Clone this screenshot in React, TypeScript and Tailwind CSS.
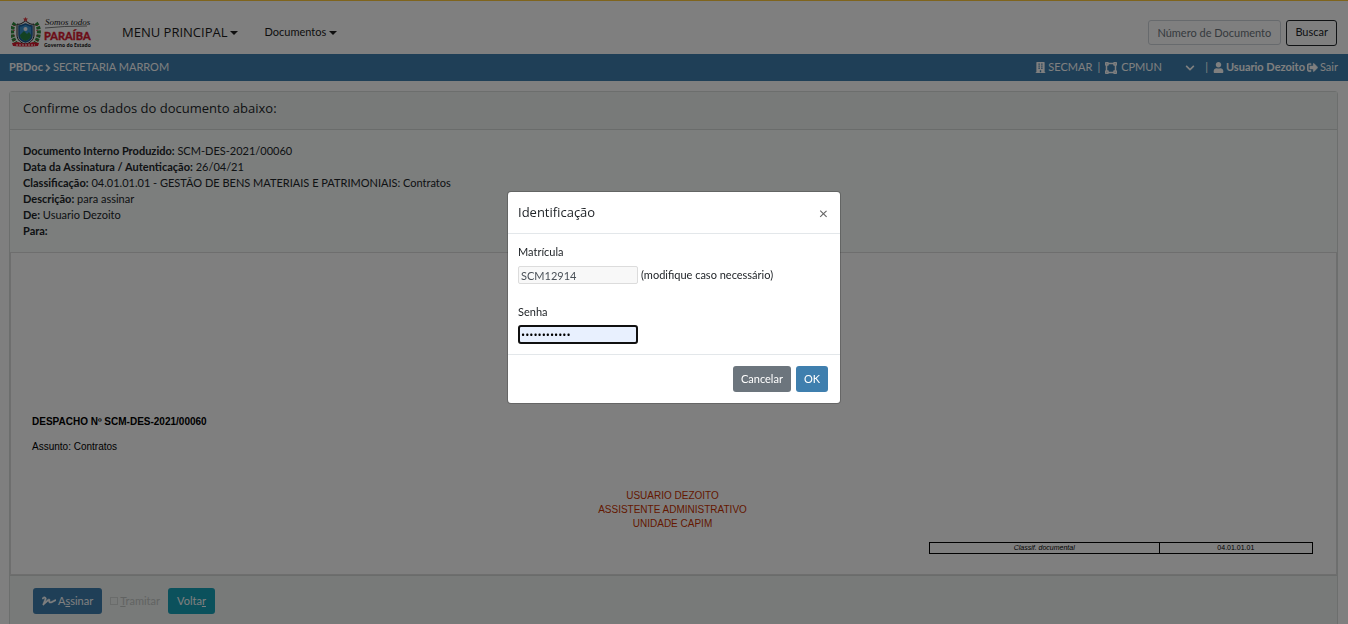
import type { ReactNode } from "react";
import {
  FaBuilding,
  FaChevronDown,
  FaChevronRight,
  FaSignature,
  FaSignOutAlt,
  FaUser,
  FaVectorSquare,
} from "react-icons/fa";

const details = [
  { label: "Documento Interno Produzido:", value: "SCM-DES-2021/00060" },
  { label: "Data da Assinatura / Autenticação:", value: "26/04/21" },
  {
    label: "Classificação:",
    value: "04.01.01.01 - GESTÃO DE BENS MATERIAIS E PATRIMONIAIS: Contratos",
  },
  { label: "Descrição:", value: "para assinar" },
  { label: "De:", value: "Usuario Dezoito" },
  { label: "Para:", value: "" },
];

function Logo() {
  return (
    <svg width="82" height="34" viewBox="0 0 82 34" role="img" aria-label="Governo da Paraíba">
      {/* coat of arms */}
      <path d="M4 7C0 12 0 21 5 27M25 7c4 5 4 14-1 20" fill="none" stroke="#2f8a3c" strokeWidth="4" strokeDasharray="3 1" />
      <path d="M3 9v16M26 9v16" stroke="#c8102e" strokeWidth="1" strokeDasharray="1 4" />
      <path d="M6 8c3 1 5-1 8.500-3C18 7 20 9 23 8v11c0 5-4 8-8.500 9C10 27 6 24 6 19z" fill="#f4f4f4" stroke="#222" strokeWidth="1" />
      <path d="M8 10c3 0 4-1 6.500-2C17 9 18 10 21 10v9c0 4-3 6-6.500 7C11 25 8 23 8 19z" fill="#3a93d0" stroke="#1b5c96" strokeWidth="1.500" />
      <path d="M9 19l4-4 3 3 2-2 2 3c0 3-2 5-5.500 6C11 24 9 22 9 19z" fill="#278444" />
      <circle cx="14.500" cy="13" r="2" fill="#f2f2f2" />
      <path d="M14.500 1l.8 1.500h1.700l-1.200 1.200.4 1.800-1.700-1-1.700 1 .4-1.800L12 2.500h1.700z" fill="#df3a43" />
      <path d="M1 27l6-1q7.500 3 15 0l6 1-1 3q-12 1-25 0z" fill="#d8182e" />
      <path d="M5 29h19" stroke="#fff" strokeWidth="1" strokeDasharray="2 1" />
      {/* wordmark */}
      <text x="34" y="9" fontSize="9" fontStyle="italic" fontFamily="Liberation Serif, serif" fill="#222">Somos todos</text>
      <path d="M34 12q18-2 42-2" fill="none" stroke="#222" strokeWidth=".6" />
      <text x="33" y="24" fontSize="11" fontWeight="700" fontFamily="Lato, sans-serif" stroke="#d8182e" strokeWidth=".4" fill="#d8182e">PARAÍBA</text>
      <text x="33" y="31" fontSize="5" fontWeight="700" fontFamily="Open Sans, sans-serif" fill="#222">Governo do Estado</text>
    </svg>
  );
}

function Caret() {
  return <span className="border-x-4 border-t-4 border-x-transparent border-t-current" />;
}

function Button({ className, children }: { className: string; children: ReactNode }) {
  return (
    <button
      type="button"
      className={`flex h-[26px] items-center gap-0.5 rounded-[3px] text-[11px] ${className}`}
    >
      {children}
    </button>
  );
}

function Header() {
  return (
    <header>
      <div className="flex h-[54px] items-center border-t border-[#ffc83a] px-[11px] pt-2.5">
        <a href="#inicio">
          <Logo />
        </a>
        <nav className="ml-[29px] flex items-center gap-[26px] text-[#1c1c1c]">
          <button type="button" className="flex items-center gap-[3px] font-['Open_Sans','Segoe_UI',sans-serif] text-[13px]">
            MENU PRINCIPAL <Caret />
          </button>
          <button type="button" className="flex items-center gap-[3px] text-[11px]">
            Documentos <Caret />
          </button>
        </nav>
        <form className="ml-auto flex items-center gap-[5px]">
          <input
            type="text"
            aria-label="Número de Documento"
            placeholder="Número de Documento"
            className="h-[25px] w-[133px] rounded-[3px] border border-[#ced4da] px-2 text-[11px] placeholder:text-[#6c757d]"
          />
          <button
            type="submit"
            className="h-[26px] rounded-[3px] border border-[#212529] px-2 text-[11px] text-[#212529]"
          >
            Buscar
          </button>
        </form>
      </div>
      <div className="flex h-[27px] items-center justify-between bg-[#3f7fae] pr-2.5 pl-[9px] text-[11px] text-white">
        <div className="flex items-center gap-px">
          <b>PBDoc</b>
          <FaChevronRight className="size-2" stroke="currentColor" strokeWidth="40" />
          <span>SECRETARIA MARROM</span>
        </div>
        <div className="flex items-center gap-0.5">
          <FaBuilding className="size-[11px]" />
          <span>SECMAR</span>
          <span className="mx-[3px]">|</span>
          <FaVectorSquare className="size-3" />
          <div className="relative flex items-center">
            <select aria-label="Lotação" className="w-[76px] appearance-none bg-transparent pl-0.5">
              <option>CPMUN</option>
            </select>
            <FaChevronDown className="pointer-events-none absolute right-0 size-2.5" />
          </div>
          <span className="mr-[3px] ml-2">|</span>
          <FaUser className="size-[11px]" />
          <b>Usuario Dezoito</b>
          <a href="#sair" className="flex items-center gap-0.5">
            <FaSignOutAlt className="size-[11px]" stroke="currentColor" strokeWidth="20" /> Sair
          </a>
        </div>
      </div>
    </header>
  );
}

function DocumentPreview() {
  return (
    <section className="border border-[#dcdcdc] bg-white pt-40 pr-[23px] pb-5 pl-[21px] font-['Liberation_Sans',Arial,sans-serif] text-[10px] text-black">
      <h2 className="mt-0.5 leading-[14px] font-bold">DESPACHO Nº SCM-DES-2021/00060</h2>
      <p className="mt-[11px] leading-[14px]">Assunto: Contratos</p>
      <div className="mt-[35px] text-center leading-[14px] text-[#c83200]">
        <p>USUARIO DEZOITO</p>
        <p>ASSISTENTE ADMINISTRATIVO</p>
        <p>UNIDADE CAPIM</p>
      </div>
      <table className="mt-[11px] ml-auto w-[30%] border-collapse text-center text-[7px] leading-[10px]">
        <tbody>
          <tr>
            <td className="w-3/5 border border-black italic">Classif. documental</td>
            <td className="border border-black">04.01.01.01</td>
          </tr>
        </tbody>
      </table>
    </section>
  );
}

function LoginDialog() {
  return (
    <div className="fixed inset-0 flex items-start justify-center bg-black/50 pt-48">
      <div
        role="dialog"
        aria-modal="true"
        aria-labelledby="dialog-title"
        className="w-[332px] rounded-[3px] bg-white text-[11px] text-[#212529] shadow-[0_0_0_1px_rgba(0,0,0,0.2)]"
      >
        <div className="flex h-[42px] items-center justify-between border-b border-[#e3e7ea] px-2.5">
          <h2 id="dialog-title" className="font-['Open_Sans','Segoe_UI',sans-serif] text-[13px] font-medium">
            Identificação
          </h2>
          <button type="button" aria-label="Fechar" className="px-0.5 text-base leading-4 text-[#666]">
            ×
          </button>
        </div>
        <div className="px-2.5 pt-2.5 pb-2.5 leading-4">
          <label htmlFor="matricula" className="block">
            Matrícula
          </label>
          <div className="mt-1.5 flex items-center gap-[3px]">
            <input
              id="matricula"
              type="text"
              defaultValue="SCM12914"
              className="h-[18px] w-[120px] rounded-[2px] border border-[#dcdcdc] bg-[#f8f8f8] px-0.5 text-[#495057]"
            />
            <span>(modifique caso necessário)</span>
          </div>
          <label htmlFor="senha" className="mt-5 block">
            Senha
          </label>
          <input
            id="senha"
            type="password"
            defaultValue="123456789012"
            className="mt-[5px] block h-[19px] w-[120px] rounded-[3px] border-2 border-[#101010] bg-[#e8f0fe] px-px font-['Open_Sans',sans-serif] text-black outline-none"
          />
        </div>
        <div className="flex justify-end gap-[5px] border-t border-[#e3e7ea] py-[11px] pr-3">
          <Button className="bg-[#6c757d] px-2 text-white">Cancelar</Button>
          <Button className="bg-[#3f7fae] px-2 text-white">OK</Button>
        </div>
      </div>
    </div>
  );
}

export default function App() {
  return (
    <div className="h-screen overflow-hidden bg-white font-['Lato','Segoe_UI',sans-serif] text-[#212529]">
      <Header />
      <main className="pt-2.5 pr-2.5 pl-[9px]">
        <div className="rounded-t-[3px] border border-[#d9dddb] bg-[#f8fcfa]">
          <h1 className="border-b border-[#d4d8d6] bg-[#f1f5f3] px-[13px] pt-1.5 pb-2.5 font-['Open_Sans','Segoe_UI',sans-serif] text-[13px] leading-[21px] font-medium">
            Confirme os dados do documento abaixo:
          </h1>
          <div className="p-[13px] text-[11px] leading-4">
            {details.map((item) => (
              <p key={item.label}>
                <b>{item.label}</b> {item.value}
              </p>
            ))}
          </div>
          <DocumentPreview />
          <div className="flex items-center border-t border-[#d4d8d6] bg-[#f1f5f3] px-[23px] py-3">
            <Button className="bg-[#3f7fae] px-[9px] text-white">
              <FaSignature className="size-3.5" stroke="currentColor" strokeWidth="20" />
              <span>
                A<u>s</u>sinar
              </span>
            </Button>
            <label className="ml-2 flex items-center gap-0.5 text-[11px] text-[#c3c7c5]">
              <input type="checkbox" disabled className="size-2 appearance-none border border-[#d5d9d7]" />
              <span>
                <u>T</u>ramitar
              </span>
            </label>
            <Button className="ml-2 bg-[#17a2b8] px-[9px] text-white">
              <span>
                Volta<u>r</u>
              </span>
            </Button>
          </div>
        </div>
      </main>
      <LoginDialog />
    </div>
  );
}
